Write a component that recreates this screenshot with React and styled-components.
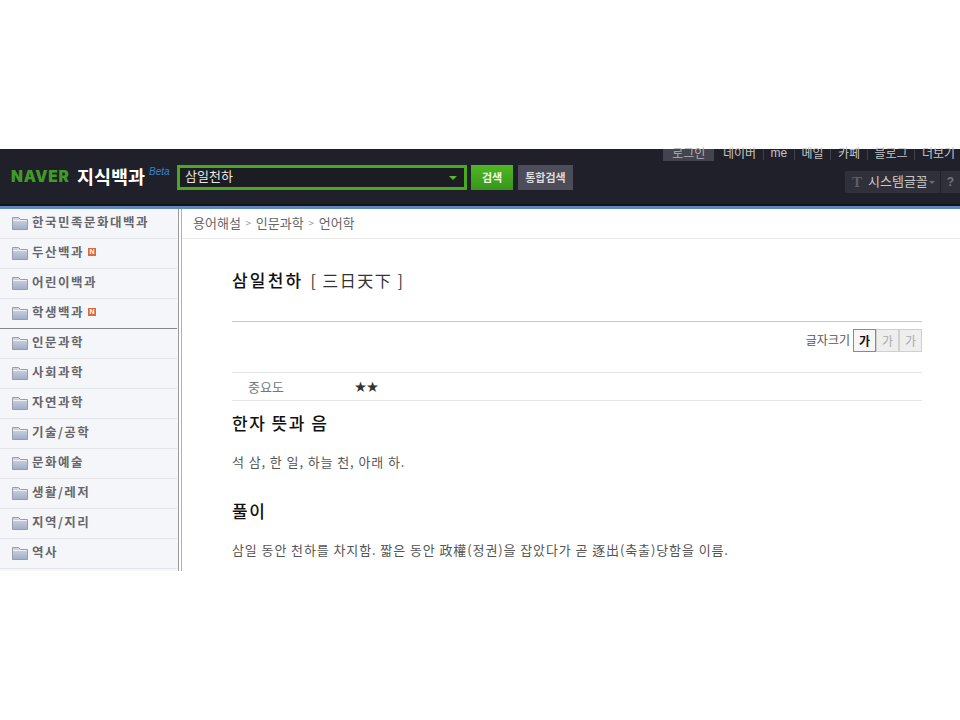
import React from 'react';
import styled, { createGlobalStyle } from 'styled-components';

const KR = `"Noto Sans CJK KR", "Liberation Sans", sans-serif`;

const GlobalStyle = createGlobalStyle`
  html, body {
    margin: 0;
    padding: 0;
    background: #fff;
    font-family: ${KR};
  }
`;

const menuTop = [
  { name: '한국민족문화대백과' },
  { name: '두산백과', fresh: true },
  { name: '어린이백과' },
  { name: '학생백과', fresh: true, last: true },
];

const menuBottom = ['인문과학', '사회과학', '자연과학', '기술/공학', '문화예술', '생활/레저', '지역/지리', '역사'];

const gnbLinks = ['네이버', 'me', '메일', '카페', '블로그', '더보기'];

function Folder() {
  return (
    <svg width="16" height="13" viewBox="0 0 16 13">
      <defs>
        <linearGradient id="folderBody" x1="0" y1="0" x2="0" y2="1">
          <stop offset="0" stopColor="#d5dae5" />
          <stop offset="1" stopColor="#a0abc4" />
        </linearGradient>
      </defs>
      <path d="M0.5 0.5 H6.5 L8.5 2.5 H15.5 V12.5 H0.5 Z" fill="url(#folderBody)" stroke="#9a9ca6" />
      <path d="M1 3 H15 V4 H1 Z" fill="#eef0f4" />
    </svg>
  );
}

function App() {
  return (
    <>
      <GlobalStyle />
      <Page>
        <Header>
          <Logo>
            <Naver>NAVER</Naver>
            <LogoTitle>지식백과</LogoTitle>
            <Beta>Beta</Beta>
          </Logo>
          <SearchBox>
            <SearchText>삼일천하</SearchText>
            <Arrow />
          </SearchBox>
          <SearchButton>검색</SearchButton>
          <AllButton>통합검색</AllButton>
          <HeaderRight>
            <Gnb>
              <Login>로그인</Login>
              {gnbLinks.map((link, i) => (
                <GnbLink key={link} $first={i === 0} $latin={link === 'me'}>{link}</GnbLink>
              ))}
            </Gnb>
            <FontTools>
              <FontPicker>
                <TIcon>T</TIcon>
                <FontName>시스템글꼴</FontName>
                <SmallArrow />
              </FontPicker>
              <Help>?</Help>
            </FontTools>
          </HeaderRight>
        </Header>
        <BlueLine />
        <Body>
          <Sidebar>
            {menuTop.map((item) => (
              <MenuItem key={item.name} $last={item.last}>
                <Folder />
                <MenuLabel>{item.name}</MenuLabel>
                {item.fresh && <NewBadge>N</NewBadge>}
              </MenuItem>
            ))}
            {menuBottom.map((name) => (
              <MenuItem key={name}>
                <Folder />
                <MenuLabel>{name}</MenuLabel>
              </MenuItem>
            ))}
          </Sidebar>
          <Content>
            <Crumbs>
              <span>용어해설</span>
              <Sep>&gt;</Sep>
              <span>인문과학</span>
              <Sep>&gt;</Sep>
              <span>언어학</span>
            </Crumbs>
            <Article>
              <Title>
                삼일천하<Hanja>[ 三日天下 ]</Hanja>
              </Title>
              <SizeRow>
                <SizeLabel>글자크기</SizeLabel>
                <SizeButton $active>가</SizeButton>
                <SizeButton>가</SizeButton>
                <SizeButton>가</SizeButton>
              </SizeRow>
              <InfoRow>
                <InfoKey>중요도</InfoKey>
                <Stars>★★</Stars>
              </InfoRow>
              <Heading>한자 뜻과 음</Heading>
              <Para>석 삼, 한 일, 하늘 천, 아래 하.</Para>
              <Heading $second>풀이</Heading>
              <Para>삼일 동안 천하를 차지함. 짧은 동안 政權(정권)을 잡았다가 곧 逐出(축출)당함을 이름.</Para>
            </Article>
          </Content>
        </Body>
      </Page>
    </>
  );
}
export default App;

const Page = styled.div`
  width: 960px;
  height: 422px;
  padding-top: 149px;
  overflow: hidden;
`;

const Header = styled.header`
  display: flex;
  align-items: flex-start;
  height: 55px;
  background: #1f2029;
  border-bottom: 2px solid #15120f;
`;

const BlueLine = styled.div`
  height: 3px;
  background: #5f88c0;
`;

const Logo = styled.div`
  display: flex;
  align-items: flex-start;
  width: 177px;
  padding: 15px 0 0 11px;
  box-sizing: border-box;
`;

const Naver = styled.span`
  width: 60px;
  margin-top: 1px;
  font-family: Inter, "Liberation Sans", sans-serif;
  font-size: 15.5px;
  line-height: 24px;
  font-weight: 900;
  color: #3f9a26;
  letter-spacing: 0.7px;
  white-space: nowrap;
`;

const LogoTitle = styled.span`
  margin-left: 6px;
  font-size: 18.5px;
  line-height: 24px;
  font-weight: 700;
  color: #fff;
`;

const Beta = styled.span`
  margin: 1px 0 0 4px;
  font-family: "Liberation Sans", sans-serif;
  font-style: italic;
  font-size: 10px;
  line-height: 14px;
  color: #3a85c8;
`;

const SearchBox = styled.div`
  display: flex;
  align-items: center;
  justify-content: space-between;
  width: 272px;
  height: 19px;
  margin-top: 16px;
  padding: 0 7px 0 5px;
  border: 3px solid #4aa91f;
  background: #1c1d22;
`;

const SearchText = styled.span`
  margin-top: -4px;
  font-size: 13px;
  line-height: 17px;
  color: #e8e8e8;
`;

const Arrow = styled.i`
  width: 0;
  height: 0;
  border-left: 4px solid transparent;
  border-right: 4px solid transparent;
  border-top: 4px solid #5fb52f;
`;

const SearchButton = styled.div`
  width: 42px;
  height: 25px;
  margin: 16px 0 0 4px;
  background: linear-gradient(#4fb824, #37951a);
  color: #f4f4f4;
  font-size: 11px;
  font-weight: 700;
  line-height: 25px;
  text-align: center;
`;

const AllButton = styled.div`
  width: 55px;
  height: 25px;
  margin: 16px 0 0 5px;
  background: #4c4d58;
  color: #dcdcdc;
  font-size: 11px;
  font-weight: 700;
  line-height: 25px;
  text-align: center;
`;

const HeaderRight = styled.div`
  flex: 1;
  display: flex;
  flex-direction: column;
  align-items: flex-end;
  min-width: 0;
`;

const Gnb = styled.nav`
  display: flex;
  align-items: flex-start;
  height: 12px;
`;

const Login = styled.span`
  width: 51px;
  height: 12px;
  margin-right: 1px;
  background: #43444f;
  color: #b0b0b0;
  font-size: 12px;
  line-height: 8px;
  text-align: center;
`;

const GnbLink = styled.span`
  height: 11px;
  padding: 0 6.7px;
  border-left: ${(p) => (p.$first ? '1px solid transparent' : '1px solid #3e3f49')};
  color: #c4c4c4;
  font-family: ${(p) => (p.$latin ? '"Liberation Sans", sans-serif' : 'inherit')};
  font-size: 12px;
  line-height: 8px;
  white-space: nowrap;
  &:last-child {
    padding-right: 5px;
  }
`;

const FontTools = styled.div`
  display: flex;
  gap: 1px;
  margin-top: 10px;
`;

const FontPicker = styled.div`
  display: flex;
  align-items: center;
  width: 95px;
  height: 22px;
  padding-left: 7px;
  box-sizing: border-box;
  background: #2f3039;
  white-space: nowrap;
`;

const FontName = styled.span`
  margin-top: -3px;
  color: #c8c8c8;
  font-size: 13px;
`;

const TIcon = styled.span`
  width: 16px;
  font-family: "Liberation Serif", serif;
  font-size: 15px;
  font-weight: 700;
  color: #5c5d66;
`;

const SmallArrow = styled.i`
  margin-left: 1px;
  width: 0;
  height: 0;
  border-left: 3px solid transparent;
  border-right: 3px solid transparent;
  border-top: 3px solid #6b6c75;
`;

const Help = styled.div`
  width: 19px;
  height: 22px;
  background: #2f3039;
  color: #73747c;
  font-family: "Liberation Sans", sans-serif;
  font-size: 12px;
  font-weight: 700;
  line-height: 22px;
  text-align: center;
`;

const Body = styled.div`
  display: flex;
  height: 362px;
`;

const Sidebar = styled.aside`
  width: 178px;
  flex: none;
  background: #f5f6fa;
  border-right: 1px solid #9a9a9a;
  box-shadow: 2px 0 0 #fff, 3px 0 0 #b0b0b0;
`;

const MenuItem = styled.div`
  display: flex;
  align-items: center;
  width: 177px;
  height: 30px;
  padding: 0 0 1px 12px;
  box-sizing: border-box;
  border-bottom: 1px solid ${(p) => (p.$last ? '#85868a' : '#e4e5e8')};
`;

const MenuLabel = styled.span`
  margin: -4px 0 0 4px;
  color: #66676b;
  font-size: 12.5px;
  font-weight: 700;
  letter-spacing: 1.5px;
  white-space: nowrap;
`;

const NewBadge = styled.span`
  width: 8px;
  height: 8px;
  margin: -3px 0 0 4px;
  background: #dc6a3c;
  color: #fff;
  font-family: "Liberation Sans", sans-serif;
  font-size: 7px;
  font-weight: 700;
  line-height: 8px;
  text-align: center;
`;

const Content = styled.main`
  flex: 1;
  min-width: 0;
  margin-left: 3px;
`;

const Crumbs = styled.div`
  display: flex;
  align-items: center;
  height: 30px;
  padding: 0 0 3px 11px;
  box-sizing: border-box;
  border-bottom: 1px solid #ececec;
  color: #666;
  font-size: 13px;
`;

const Sep = styled.span`
  width: 15px;
  color: #999;
  font-size: 10px;
  text-align: center;
`;

const Article = styled.article`
  width: 690px;
  margin-left: 50px;
`;

const Title = styled.h1`
  margin: 0;
  height: 83px;
  padding-top: 29px;
  box-sizing: border-box;
  border-bottom: 1px solid #c8c8c8;
  color: #111;
  font-size: 17px;
  font-weight: 500;
  letter-spacing: 2.2px;
  line-height: 24px;
`;

const Hanja = styled.span`
  margin-left: 7px;
  color: #333;
  font-size: 16px;
  font-weight: 400;
  letter-spacing: 1.5px;
`;

const SizeRow = styled.div`
  display: flex;
  align-items: flex-start;
  justify-content: flex-end;
  height: 51px;
  padding-top: 7px;
  box-sizing: border-box;
  border-bottom: 1px solid #e4e4e4;
`;

const SizeLabel = styled.span`
  margin-right: 3px;
  color: #555;
  font-size: 12px;
  line-height: 21px;
`;

const SizeButton = styled.span`
  width: 23px;
  height: 23px;
  box-sizing: border-box;
  border: 1px solid ${(p) => (p.$active ? '#8a8a8a' : '#d0d0d0')};
  background: ${(p) => (p.$active ? '#f6f6f6' : '#eeeeee')};
  color: ${(p) => (p.$active ? '#111' : '#aaa')};
  font-size: 12px;
  font-weight: ${(p) => (p.$active ? 700 : 400)};
  line-height: 21px;
  text-align: center;
`;

const InfoRow = styled.div`
  display: flex;
  align-items: center;
  height: 28px;
  box-sizing: border-box;
  border-bottom: 1px solid #e4e4e4;
`;

const InfoKey = styled.span`
  width: 122px;
  padding-left: 16px;
  box-sizing: border-box;
  color: #777;
  font-size: 13px;
`;

const Stars = styled.span`
  color: #333;
  font-family: "DejaVu Sans", sans-serif;
  font-size: 14.5px;
  letter-spacing: -1px;
`;

const Heading = styled.h2`
  margin: ${(p) => (p.$second ? '27px' : '10px')} 0 0;
  color: #111;
  font-size: 17px;
  font-weight: 500;
  letter-spacing: 1.5px;
  line-height: 24px;
`;

const Para = styled.p`
  margin: 17px 0 0;
  color: #555;
  font-size: 13px;
  letter-spacing: 0.9px;
  line-height: 20px;
  white-space: nowrap;
`;
